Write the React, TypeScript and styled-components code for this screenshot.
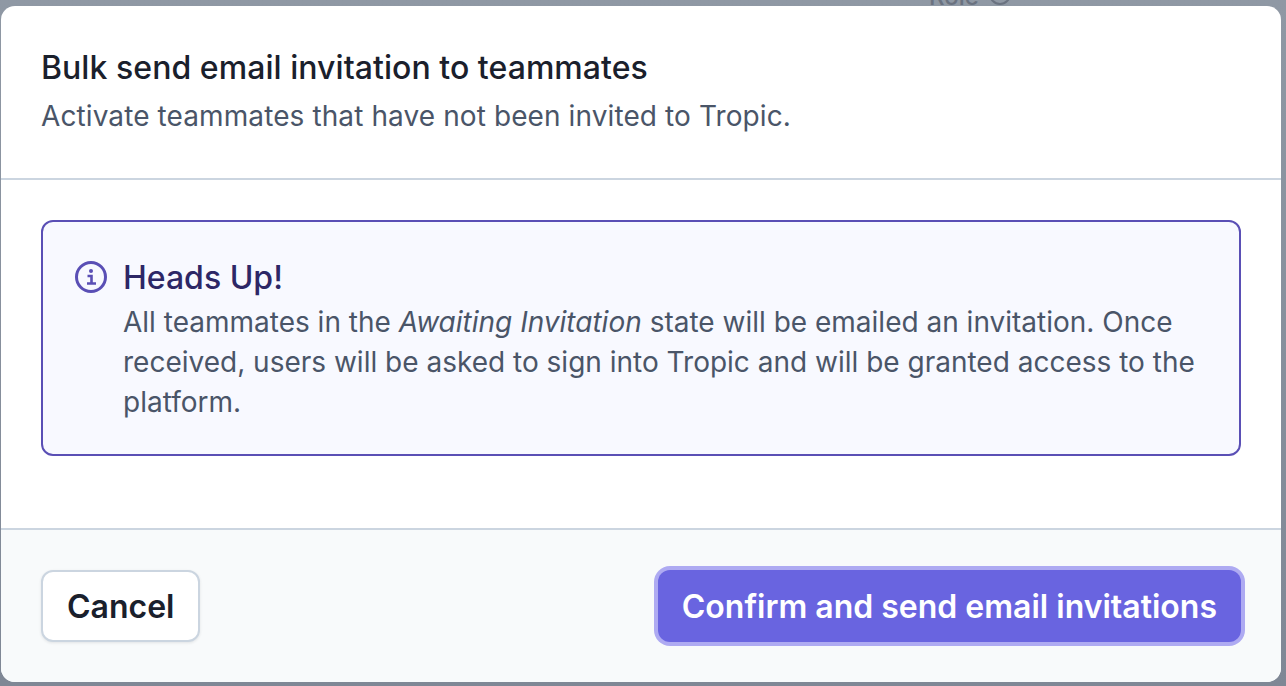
import React from 'react';
import styled, { createGlobalStyle } from 'styled-components';

const GlobalStyle = createGlobalStyle`
  html, body {
    margin: 0;
    padding: 0;
    height: 100%;
    overflow: hidden;
    font-family: Inter, "Liberation Sans", sans-serif;
  }
  #root {
    height: 100%;
  }
`;

const Backdrop = styled.div`
  position: relative;
  box-sizing: border-box;
  height: 686px;
  padding: 6px 5px 4px 1px;
  background: linear-gradient(#8f98a4, #7f8795);
  overflow: hidden;
`;

const BehindLabel = styled.div`
  position: absolute;
  top: -18px;
  left: 929px;
  display: flex;
  align-items: flex-end;
  gap: 10px;
  font-size: 24px;
  line-height: 29px;
  font-weight: 500;
  color: #6a7280;
`;

const BehindIcon = styled.span`
  box-sizing: border-box;
  width: 22px;
  height: 22px;
  margin-bottom: 6px;
  border: 2px solid #6a7280;
  border-radius: 50%;
`;

const Modal = styled.div`
  position: relative;
  height: 100%;
  display: flex;
  flex-direction: column;
  background: #fff;
  border-radius: 14px;
  overflow: hidden;
`;

const Header = styled.div`
  height: 172px;
  padding: 0 40px;
  border-bottom: 2px solid #cbd5e0;
  display: flex;
  flex-direction: column;
  align-items: flex-start;
`;

const Title = styled.h2`
  margin: 41px 0 0;
  font-size: 32px;
  line-height: 42px;
  font-weight: 500;
  letter-spacing: 0.05px;
  color: #1a202c;
`;

const Subtitle = styled.p`
  margin: 7px 0 0;
  font-size: 28px;
  line-height: 40px;
  font-weight: 400;
  letter-spacing: 0.1px;
  color: #4a5568;
`;

const Body = styled.div`
  flex: 1;
  padding: 40px 40px 0;
`;

const Alert = styled.div`
  box-sizing: border-box;
  height: 236px;
  display: flex;
  gap: 16px;
  padding: 32px 32px 0;
  background: #f8f9ff;
  border: 2px solid #5a4fb5;
  border-radius: 12px;
`;

const AlertIcon = styled.svg`
  flex: none;
  width: 32px;
  height: 32px;
  margin-top: 7px;
  color: #5a4fb5;
`;

const AlertText = styled.div`
  display: flex;
  flex-direction: column;
`;

const AlertTitle = styled.div`
  font-size: 32px;
  line-height: 48px;
  font-weight: 500;
  color: #2d2766;
`;

const AlertMessage = styled.div`
  font-size: 28px;
  line-height: 40px;
  color: #4a5568;
`;

const Footer = styled.div`
  height: 152px;
  padding: 0 40px;
  border-top: 2px solid #cbd5e0;
  background: #f8fafb;
  display: flex;
  align-items: center;
  justify-content: space-between;
`;

const Button = styled.button<{ $primary?: boolean }>`
  height: 72px;
  box-sizing: border-box;
  font-family: inherit;
  font-size: 32px;
  font-weight: 600;
  border-radius: 12px;
  padding: 0 24px;
  color: ${(p) => (p.$primary ? '#fff' : '#1a202c')};
  background: ${(p) => (p.$primary ? '#6964e0' : '#fff')};
  border: ${(p) => (p.$primary ? 'none' : '2px solid #cbd5e0')};
  box-shadow: ${(p) => (p.$primary ? '0 0 0 4px #aeaaf2' : '0 1px 3px rgba(26, 32, 44, 0.1)')};
`;

const App = () => {
  return (
    <>
      <GlobalStyle />
      <Backdrop>
        <BehindLabel>
          Role <BehindIcon />
        </BehindLabel>
        <Modal>
          <Header>
            <Title>Bulk send email invitation to teammates</Title>
            <Subtitle>Activate teammates that have not been invited to Tropic.</Subtitle>
          </Header>
          <Body>
            <Alert>
              <AlertIcon viewBox="0 0 32 32" fill="none">
                <circle cx="16" cy="16" r="14.5" stroke="currentColor" strokeWidth="3" />
                <circle cx="16" cy="10" r="2" fill="currentColor" />
                <path d="M12.5 15H16.5V22.5M12 22.5H21" stroke="currentColor" strokeWidth="2.6" />
              </AlertIcon>
              <AlertText>
                <AlertTitle>Heads Up!</AlertTitle>
                <AlertMessage>
                  All teammates in the <em>Awaiting Invitation</em> state will be emailed an invitation. Once received,
                  users will be asked to sign into Tropic and will be granted access to the platform.
                </AlertMessage>
              </AlertText>
            </Alert>
          </Body>
          <Footer>
            <Button>Cancel</Button>
            <Button $primary>Confirm and send email invitations</Button>
          </Footer>
        </Modal>
      </Backdrop>
    </>
  );
};

export default App;
